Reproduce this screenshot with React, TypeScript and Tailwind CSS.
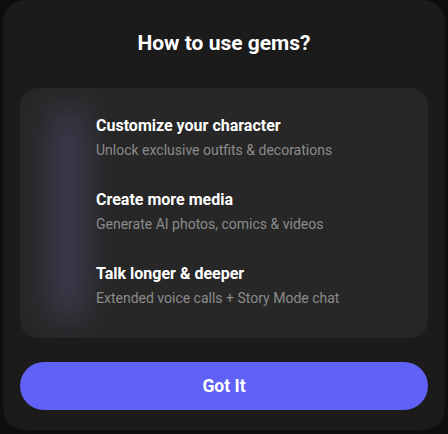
import React from "react";

const items = [
  { title: "Customize your character", sub: "Unlock exclusive outfits & decorations" },
  { title: "Create more media", sub: "Generate AI photos, comics & videos" },
  { title: "Talk longer & deeper", sub: "Extended voice calls + Story Mode chat" },
];

export default function App() {
  return (
    <div
      className="w-[448px] h-[434px] bg-[#0e0e0e] overflow-hidden"
      style={{ fontFamily: "Roboto, 'Liberation Sans', sans-serif" }}
    >
      <div className="mx-[3px] h-[430px] rounded-[22px] bg-[#1b1b1b] px-[17px] pt-[28px] flex flex-col">
        <h1 className="text-center text-white font-bold text-[21px] leading-[30px]">
          How to use gems?
        </h1>
        <div className="relative mt-[30px] h-[250px] rounded-[18px] bg-[#272727] overflow-hidden pl-[76px] pt-[28px] flex flex-col gap-[31px]">
          <div className="absolute left-[30px] top-[18px] w-[36px] h-[215px] rounded-full bg-[#4c4b6c] blur-[16px] opacity-60" />
          {items.map((it) => (
            <div key={it.title} className="relative flex flex-col gap-[5px]">
              <div className="text-white font-bold text-[16px] leading-[20px]">{it.title}</div>
              <div className="text-[#8b8b8b] text-[14px] leading-[18px]">{it.sub}</div>
            </div>
          ))}
        </div>
        <button className="mt-[24px] h-[48px] w-full rounded-full bg-[#6061f5] text-white font-bold text-[17.5px]">
          Got It
        </button>
      </div>
    </div>
  );
}
